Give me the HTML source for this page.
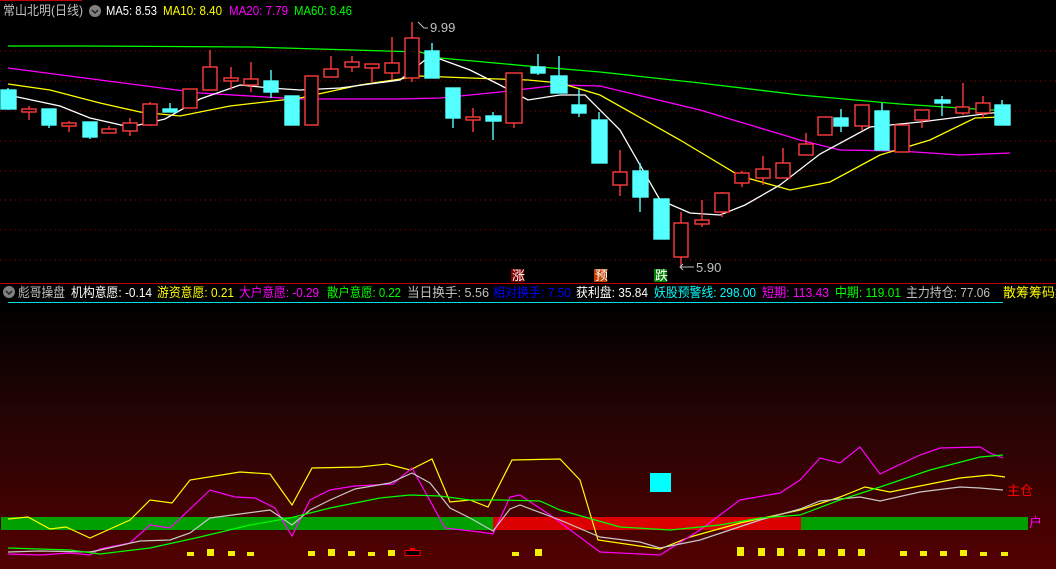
<!DOCTYPE html>
<html><head><meta charset="utf-8"><style>
html,body{margin:0;padding:0;background:#000;width:1056px;height:569px;overflow:hidden}
svg{display:block}
text{font-family:"Liberation Sans","Noto Sans CJK SC",sans-serif;font-size:13px}
</style></head><body>
<svg width="1056" height="569" xmlns="http://www.w3.org/2000/svg">
<defs><linearGradient id="g" x1="0" y1="0" x2="0" y2="1">
<stop offset="0" stop-color="#000"/><stop offset="0.45" stop-color="#260404"/><stop offset="1" stop-color="#540000"/></linearGradient></defs>
<rect x="0" y="0" width="1056" height="569" fill="#000"/>
<rect x="0" y="304" width="1056" height="265" fill="url(#g)"/>
<line x1="0" y1="0.5" x2="82" y2="0.5" stroke="#c00000"/>
<g stroke="#a00000" stroke-dasharray="1,4">
<line x1="0" y1="51" x2="1056" y2="51"/><line x1="0" y1="81" x2="1056" y2="81"/><line x1="0" y1="111" x2="1056" y2="111"/><line x1="0" y1="141" x2="1056" y2="141"/><line x1="0" y1="171" x2="1056" y2="171"/><line x1="0" y1="200" x2="1056" y2="200"/><line x1="0" y1="230" x2="1056" y2="230"/><line x1="0" y1="260" x2="1056" y2="260"/>
</g>
<line x1="0" y1="283.5" x2="1056" y2="283.5" stroke="#c00000"/>
<line x1="8" y1="302.5" x2="1003" y2="302.5" stroke="#00e0e0"/>
<g fill="none" stroke-width="1.3">
<polyline stroke="#00ff00" points="8,46 80,46 250,47 420,52 440,58 528,66 600,72 700,83 800,95 900,104 990,110 1010,110"/>
<polyline stroke="#ff00ff" points="8,68 100,80 200,93 300,99 400,99 440,98 500,92 560,85 600,86 700,110 800,140 840,150 900,151 960,155 1010,153"/>
<polyline stroke="#ffff00" points="8,84 50,90 100,103 140,112 180,116 230,106 300,98 360,85 420,76 470,78 528,80 560,83 600,95 680,140 740,176 790,190 830,182 880,155 930,140 975,118 1000,117"/>
<polyline stroke="#ffffff" points="8,95 60,106 90,118 130,127 165,119 200,99 240,85 270,88 300,90 340,88 400,80 425,60 440,59 470,70 500,85 528,100 560,95 585,95 620,130 660,200 690,213 720,215 745,205 780,185 820,154 870,127 920,122 960,117 1000,112"/>
</g>
<g stroke-width="1.4">
<g stroke="#54ffff" fill="#54ffff">
<line x1="8" y1="88" x2="8" y2="110"/><rect x="1" y="90" width="15" height="19"/>
<line x1="49" y1="109" x2="49" y2="128"/><rect x="42" y="109" width="14" height="16"/>
<line x1="90" y1="122" x2="90" y2="139"/><rect x="83" y="122" width="14" height="15"/>
<line x1="170" y1="103" x2="170" y2="112"/><rect x="163" y="109" width="14" height="3"/>
<line x1="271" y1="70" x2="271" y2="98"/><rect x="264" y="81" width="14" height="11"/>
<rect x="285" y="96" width="14" height="29"/>
<line x1="432" y1="43" x2="432" y2="78"/><rect x="425" y="51" width="14" height="27"/>
<line x1="453" y1="88" x2="453" y2="128"/><rect x="446" y="88" width="14" height="30"/>
<line x1="493" y1="112" x2="493" y2="140"/><rect x="486" y="116" width="15" height="5"/>
<line x1="538" y1="54" x2="538" y2="75"/><rect x="531" y="67" width="14" height="6"/>
<line x1="559" y1="56" x2="559" y2="93"/><rect x="551" y="76" width="16" height="17"/>
<line x1="579" y1="89" x2="579" y2="117"/><rect x="572" y="105" width="14" height="8"/>
<line x1="599" y1="112" x2="599" y2="163"/><rect x="592" y="120" width="15" height="43"/>
<line x1="640" y1="163" x2="640" y2="212"/><rect x="633" y="171" width="15" height="26"/>
<rect x="654" y="199" width="15" height="40"/>
<line x1="841" y1="109" x2="841" y2="132"/><rect x="834" y="118" width="14" height="8"/>
<line x1="882" y1="103" x2="882" y2="150"/><rect x="875" y="111" width="14" height="39"/>
<line x1="942" y1="96" x2="942" y2="116"/><rect x="935" y="100" width="15" height="3"/>
<line x1="1002" y1="100" x2="1002" y2="125"/><rect x="995" y="105" width="15" height="20"/>
</g>
<g stroke="#ff3c3c" fill="none">
<line x1="29" y1="106" x2="29" y2="120"/><rect x="22" y="109" width="14" height="3" fill="#000"/>
<line x1="69" y1="121" x2="69" y2="132"/><rect x="62" y="123" width="14" height="3" fill="#000"/>
<line x1="109" y1="126" x2="109" y2="133"/><rect x="102" y="129" width="14" height="4" fill="#000"/>
<line x1="130" y1="118" x2="130" y2="136"/><rect x="123" y="123" width="14" height="8" fill="#000"/>
<line x1="150" y1="102" x2="150" y2="126"/><rect x="143" y="104" width="14" height="21" fill="#000"/>
<rect x="183" y="89" width="14" height="19" fill="#000"/>
<line x1="210" y1="50" x2="210" y2="67"/><rect x="203" y="67" width="14" height="23" fill="#000"/>
<line x1="231" y1="67" x2="231" y2="90"/><rect x="224" y="78" width="14" height="3" fill="#000"/>
<line x1="251" y1="62" x2="251" y2="92"/><rect x="244" y="79" width="14" height="6" fill="#000"/>
<rect x="305" y="76" width="13" height="49" fill="#000"/>
<line x1="331" y1="56" x2="331" y2="69"/><rect x="324" y="69" width="14" height="8" fill="#000"/>
<line x1="352" y1="56" x2="352" y2="72"/><rect x="345" y="62" width="14" height="5" fill="#000"/>
<line x1="372" y1="68" x2="372" y2="82"/><rect x="365" y="64" width="14" height="4" fill="#000"/>
<line x1="392" y1="37" x2="392" y2="80"/><rect x="385" y="63" width="14" height="10" fill="#000"/>
<line x1="412" y1="22" x2="412" y2="82"/><rect x="405" y="38" width="14" height="40" fill="#000"/>
<line x1="473" y1="108" x2="473" y2="132"/><rect x="466" y="117" width="14" height="3" fill="#000"/>
<line x1="514" y1="73" x2="514" y2="128"/><rect x="506" y="73" width="16" height="50" fill="#000"/>
<line x1="620" y1="150" x2="620" y2="196"/><rect x="613" y="172" width="14" height="13" fill="#000"/>
<line x1="681" y1="212" x2="681" y2="267"/><rect x="674" y="223" width="14" height="34" fill="#000"/>
<line x1="702" y1="200" x2="702" y2="227"/><rect x="695" y="220" width="14" height="4" fill="#000"/>
<line x1="722" y1="192" x2="722" y2="217"/><rect x="715" y="193" width="14" height="19" fill="#000"/>
<line x1="742" y1="171" x2="742" y2="187"/><rect x="735" y="173" width="14" height="10" fill="#000"/>
<line x1="763" y1="156" x2="763" y2="185"/><rect x="756" y="169" width="14" height="9" fill="#000"/>
<line x1="783" y1="148" x2="783" y2="163"/><rect x="776" y="163" width="14" height="15" fill="#000"/>
<line x1="806" y1="133" x2="806" y2="155"/><rect x="799" y="144" width="14" height="11" fill="#000"/>
<rect x="818" y="117" width="14" height="18" fill="#000"/>
<line x1="862" y1="105" x2="862" y2="131"/><rect x="855" y="105" width="14" height="21" fill="#000"/>
<rect x="895" y="125" width="14" height="27" fill="#000"/>
<line x1="922" y1="110" x2="922" y2="128"/><rect x="915" y="110" width="14" height="10" fill="#000"/>
<line x1="963" y1="83" x2="963" y2="115"/><rect x="956" y="107" width="13" height="6" fill="#000"/>
<line x1="983" y1="96" x2="983" y2="118"/><rect x="976" y="103" width="14" height="10" fill="#000"/>
</g>
</g>
<g stroke="#c0c0c0" fill="none"><polyline points="418,22 424,28 428,28"/><polyline points="683,264 680,267 683,270"/><line x1="680" y1="267" x2="694" y2="267"/></g>
<text x="430" y="32" fill="#c0c0c0" font-size="12">9.99</text>
<text x="696" y="272" fill="#c0c0c0" font-size="12">5.90</text>
<rect x="511" y="269" width="13" height="13" fill="#800000"/><text x="512" y="280" fill="#fff" font-size="11">涨</text>
<rect x="594" y="269" width="13" height="13" fill="#c04000"/><text x="595" y="280" fill="#fff" font-size="11">预</text>
<rect x="654" y="269" width="13" height="13" fill="#008000"/><text x="655" y="280" fill="#fff" font-size="11">跌</text>
<text x="3" y="15" fill="#c0c0c0" textLength="80" lengthAdjust="spacingAndGlyphs">常山北明(日线)</text>
<circle cx="95" cy="11" r="6" fill="#808080"/><polyline points="92,10 95,13 98,10" fill="none" stroke="#222" stroke-width="1.5"/>
<text x="106" y="15" fill="#fff" textLength="51" lengthAdjust="spacingAndGlyphs">MA5: 8.53</text>
<text x="163" y="15" fill="#ffff00" textLength="59" lengthAdjust="spacingAndGlyphs">MA10: 8.40</text>
<text x="229" y="15" fill="#ff00ff" textLength="59" lengthAdjust="spacingAndGlyphs">MA20: 7.79</text>
<text x="294" y="15" fill="#00ff00" textLength="58" lengthAdjust="spacingAndGlyphs">MA60: 8.46</text>
<circle cx="9" cy="292" r="6" fill="#808080"/><polyline points="6,291 9,294 12,291" fill="none" stroke="#222" stroke-width="1.5"/>
<g>
<text x="18" y="297" fill="#c0c0c0" textLength="47" lengthAdjust="spacingAndGlyphs">彪哥操盘</text>
<text x="71" y="297" fill="#fff" textLength="81" lengthAdjust="spacingAndGlyphs">机构意愿: -0.14</text>
<text x="157" y="297" fill="#ffff00" textLength="77" lengthAdjust="spacingAndGlyphs">游资意愿: 0.21</text>
<text x="239" y="297" fill="#ff00ff" textLength="80" lengthAdjust="spacingAndGlyphs">大户意愿: -0.29</text>
<text x="327" y="297" fill="#00ff00" textLength="74" lengthAdjust="spacingAndGlyphs">散户意愿: 0.22</text>
<text x="407" y="297" fill="#c0c0c0" textLength="82" lengthAdjust="spacingAndGlyphs">当日换手: 5.56</text>
<text x="493" y="297" fill="#0000ff" textLength="78" lengthAdjust="spacingAndGlyphs">相对换手: 7.50</text>
<text x="576" y="297" fill="#fff" textLength="72" lengthAdjust="spacingAndGlyphs">获利盘: 35.84</text>
<text x="654" y="297" fill="#00ffff" textLength="102" lengthAdjust="spacingAndGlyphs">妖股预警线: 298.00</text>
<text x="762" y="297" fill="#ff00ff" textLength="67" lengthAdjust="spacingAndGlyphs">短期: 113.43</text>
<text x="835" y="297" fill="#00ff00" textLength="66" lengthAdjust="spacingAndGlyphs">中期: 119.01</text>
<text x="906" y="297" fill="#c0c0c0" textLength="84" lengthAdjust="spacingAndGlyphs">主力持仓: 77.06</text>
<text x="1003" y="297" fill="#ffff00">散筹筹码集</text>
</g>
<rect x="1" y="517" width="496" height="13" fill="#00a000"/>
<rect x="493" y="517" width="309" height="13" fill="#dd0000"/>
<rect x="801" y="517" width="227" height="13" fill="#00a000"/>
<rect x="650" y="473" width="21" height="19" fill="#00ffff"/>
<g fill="none" stroke-width="1.2">
<polyline stroke="#ffff00" points="8,519 28,517 50,529 66,527 90,538 130,520 150,500 172,503 190,480 240,472 270,474 292,505 312,468 360,467 387,464 410,470 432,459 450,502 470,500 488,507 512,460 560,459 580,480 598,540 660,549 690,537 740,523 800,510 840,497 865,487 890,492 960,478 990,475 1005,477"/>
<polyline stroke="#ff00ff" points="8,554 40,555 70,553 90,555 100,549 130,543 150,525 170,528 210,490 235,497 255,498 275,508 292,536 310,500 330,490 355,486 393,484 412,468 445,528 480,532 493,534 510,497 520,495 550,515 600,552 660,555 700,530 740,500 780,493 800,480 820,458 840,463 860,447 880,474 920,455 940,448 980,447 990,453 1003,458"/>
<polyline stroke="#c8c8c8" points="8,552 40,551 90,552 100,550 140,541 170,540 190,533 210,518 270,510 292,525 310,510 330,500 355,489 390,483 412,473 430,483 450,508 470,518 493,531 510,509 520,505 560,520 600,537 640,542 660,548 700,540 760,520 800,509 820,501 860,497 880,501 920,492 960,487 980,488 1003,490"/>
<polyline stroke="#00ff00" points="8,548 70,550 100,554 150,548 200,537 250,525 290,518 330,508 380,498 410,495 440,496 470,500 500,500 540,501 560,510 620,527 670,530 720,525 760,518 800,515 840,500 880,487 930,470 980,457 1003,455"/>
</g>
<g fill="#f0f000">
<rect x="187" y="552" width="7" height="4"/><rect x="207" y="549" width="7" height="7"/><rect x="228" y="551" width="7" height="5"/><rect x="247" y="552" width="7" height="4"/>
<rect x="308" y="551" width="7" height="5"/><rect x="328" y="549" width="7" height="7"/><rect x="348" y="551" width="7" height="5"/><rect x="368" y="552" width="7" height="4"/><rect x="388" y="550" width="7" height="6"/>
<rect x="512" y="552" width="7" height="4"/><rect x="535" y="549" width="7" height="7"/>
<rect x="737" y="547" width="7" height="9"/><rect x="758" y="548" width="7" height="8"/><rect x="777" y="548" width="7" height="8"/><rect x="798" y="549" width="7" height="7"/><rect x="818" y="549" width="7" height="7"/><rect x="838" y="549" width="7" height="7"/><rect x="858" y="549" width="7" height="7"/>
<rect x="900" y="551" width="7" height="5"/><rect x="920" y="551" width="7" height="5"/><rect x="940" y="551" width="7" height="5"/><rect x="960" y="550" width="7" height="6"/><rect x="980" y="552" width="7" height="4"/><rect x="1001" y="552" width="7" height="4"/>
</g>
<rect x="405" y="550.5" width="15" height="5" fill="#000" stroke="#ff0000"/><rect x="410" y="548" width="5" height="2" fill="#ff0000"/>
<text x="1007" y="495" fill="#ff0000" font-size="12">主仓</text>
<text x="1029" y="527" fill="#ff00ff" font-size="12">户</text>
</svg>
</body></html>
